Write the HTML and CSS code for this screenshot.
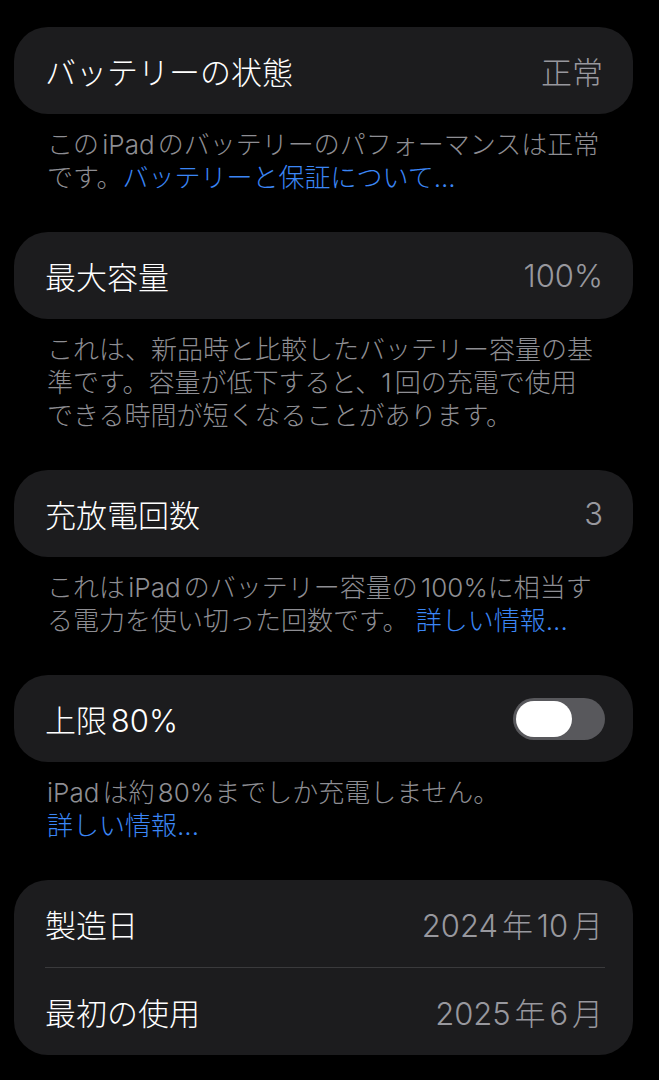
FILE: index.html
```html
<!DOCTYPE html>
<html lang="ja">
<head>
    <meta charset="UTF-8">
    <title>バッテリーの状態</title>
    <link rel="stylesheet" href="styles.css">
</head>
<body>
    <div class="page">
        <div class="group">
            <div class="row">
                <span class="label">バッテリーの状態</span>
                <span class="value">正常</span>
            </div>
        </div>
        <p class="note">このiPadのバッテリーのパフォーマンスは正常<br>です。<a href="javascript:;" class="link">バッテリーと保証について...</a></p>

        <div class="group">
            <div class="row">
                <span class="label">最大容量</span>
                <span class="value">100%</span>
            </div>
        </div>
        <p class="note">これは、新品時と比較したバッテリー容量の基<br>準です。容量が低下すると、1回の充電で使用<br>できる時間が短くなることがあります。</p>

        <div class="group">
            <div class="row">
                <span class="label">充放電回数</span>
                <span class="value">3</span>
            </div>
        </div>
        <p class="note">これはiPadのバッテリー容量の100%に相当す<br>る電力を使い切った回数です。 <a href="javascript:;" class="link">詳しい情報...</a></p>

        <div class="group">
            <div class="row">
                <span class="label">上限80%</span>
                <span class="switch" id="limit"><span class="knob"></span></span>
            </div>
        </div>
        <p class="note">iPadは約80%までしか充電しません。<br><a href="javascript:;" class="link">詳しい情報...</a></p>

        <div class="group">
            <div class="row">
                <span class="label">製造日</span>
                <span class="value">2024年10月</span>
            </div>
            <div class="sep"></div>
            <div class="row">
                <span class="label">最初の使用</span>
                <span class="value">2025年6月</span>
            </div>
        </div>
    </div>
</body>
</html>
```

FILE: styles.css
```css
* {
    margin: 0;
    padding: 0;
    box-sizing: border-box;
}
a {
    text-decoration: none;
}
body {
    background-color: #000;
    font-family: "Inter", "Noto Sans CJK JP", sans-serif;
    font-weight: 300;
    text-autospace: normal;
}
.page {
    padding: 27px 26px 0 14px;
}
.group {
    background-color: #1c1c1e;
    border-radius: 34px;
}
.row {
    display: flex;
    align-items: center;
    justify-content: space-between;
    height: 87px;
    padding: 0 30px 0 31px;
}
.label {
    color: #fff;
    font-size: 31px;
}
.value {
    color: #98989e;
    font-size: 31px;
}
.sep {
    height: 1px;
    margin: 0 28px 0 31px;
    background-color: #3a3a3c;
}
.note {
    margin: 14px 0 38px;
    padding: 0 6px 0 33px;
    color: #8e8e93;
    font-size: 26px;
    line-height: 33px;
}
.link {
    color: #3b86f5;
}
.switch {
    display: flex;
    align-items: center;
    width: 92px;
    height: 42px;
    margin-right: -2px;
    padding: 0 3px;
    border-radius: 21px;
    background-color: #58585c;
}
.switch .knob {
    width: 56px;
    height: 36px;
    border-radius: 18px;
    background-color: #fff;
}
```
